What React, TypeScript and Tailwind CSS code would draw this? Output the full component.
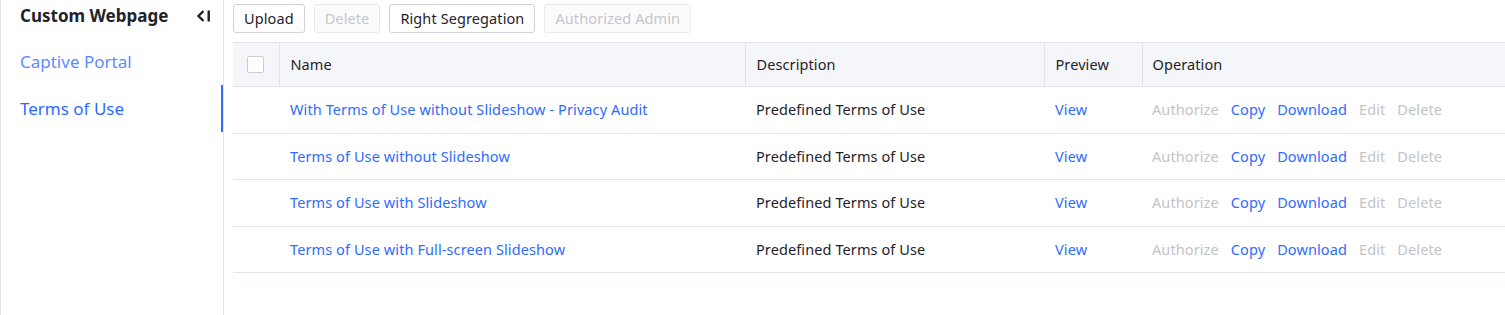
import { useState } from "react";

const rows = [
  "With Terms of Use without Slideshow - Privacy Audit",
  "Terms of Use without Slideshow",
  "Terms of Use with Slideshow",
  "Terms of Use with Full-screen Slideshow",
];

function CollapseIcon() {
  return (
    <svg width="16" height="16" viewBox="0 0 16 16" className="text-[#1f2329]">
      <path d="M7.5 3 L2.5 8 L7.5 13" fill="none" stroke="currentColor" strokeWidth="2.4" />
      <rect x="11.5" y="2.5" width="2.4" height="11" fill="currentColor" />
    </svg>
  );
}

export default function App() {
  const [active, setActive] = useState("Terms of Use");

  return (
    <div className="flex h-[315px] w-[1505px] bg-white text-[14.5px] tracking-[0.1px] text-[#1f2329] font-['Noto_Sans',sans-serif] overflow-hidden">
      {/* Sidebar */}
      <aside className="w-[224px] shrink-0 border-l border-r border-[#e4e6eb] flex flex-col tracking-normal">
        <div className="h-[32px] mb-[6px] flex items-center justify-between pl-[19px] pr-[11px]">
          <span className="text-[17px] font-bold">Custom Webpage</span>
          <CollapseIcon />
        </div>
        {["Captive Portal", "Terms of Use"].map((item) => (
          <button
            key={item}
            onClick={() => setActive(item)}
            className={`relative h-[47px] text-left pl-[19px] text-[17px] ${
              active === item ? "text-[#2f6bff]" : "text-[#5b8cff]"
            }`}
          >
            {item}
            {active === item && <span className="absolute right-0 top-0 h-full w-[2px] bg-[#2f6bff]" />}
          </button>
        ))}
      </aside>

      {/* Main */}
      <main className="flex-1 pl-[9px] pt-[4px]">
        <div className="flex gap-[9px] h-[29px]">
          <button className="px-[10px] border border-[#cfd2d8] rounded-[3px] bg-white">Upload</button>
          <button className="px-[10px] border border-[#e8e9ed] rounded-[3px] bg-[#fbfbfc] text-[#c4c6cc]">Delete</button>
          <button className="px-[10px] border border-[#cfd2d8] rounded-[3px] bg-white">Right Segregation</button>
          <button className="px-[10px] border border-[#e8e9ed] rounded-[3px] bg-[#fbfbfc] text-[#c4c6cc]">Authorized Admin</button>
        </div>

        <table className="mt-[9px] w-[1272px] table-fixed border-collapse">
          <colgroup>
            <col className="w-[46px]" />
            <col className="w-[466px]" />
            <col className="w-[299px]" />
            <col className="w-[98px]" />
            <col />
          </colgroup>
          <thead>
            <tr className="h-[44px] bg-[#f5f6f9] border-t border-b border-[#e1e4ea] text-left">
              <th className="border-r border-[#e1e4ea] pl-[14px] font-normal">
                <span className="block w-[17px] h-[17px] border border-[#c9ccd3] rounded-[2px] bg-white" />
              </th>
              <th className="border-r border-[#e1e4ea] pl-[11px] font-normal">Name</th>
              <th className="border-r border-[#e1e4ea] pl-[11px] font-normal">Description</th>
              <th className="border-r border-[#e1e4ea] pl-[11px] font-normal">Preview</th>
              <th className="pl-[10px] font-normal">Operation</th>
            </tr>
          </thead>
          <tbody>
            {rows.map((name, i) => (
              <tr key={name} className={`${i % 2 === 0 ? "h-[47px]" : "h-[46px]"} border-b border-[#e1e4ea]`}>
                <td />
                <td className="pl-[11px] text-[#2f6bff]">{name}</td>
                <td className="pl-[11px]">Predefined Terms of Use</td>
                <td className="pl-[11px] text-[#2f6bff]">View</td>
                <td className="pl-[10px]">
                  <div className="flex gap-[12px]">
                    <span className="text-[#c2c4c9]">Authorize</span>
                    <span className="text-[#2f6bff]">Copy</span>
                    <span className="text-[#2f6bff]">Download</span>
                    <span className="text-[#c2c4c9]">Edit</span>
                    <span className="text-[#c2c4c9]">Delete</span>
                  </div>
                </td>
              </tr>
            ))}
          </tbody>
        </table>
      </main>
    </div>
  );
}
